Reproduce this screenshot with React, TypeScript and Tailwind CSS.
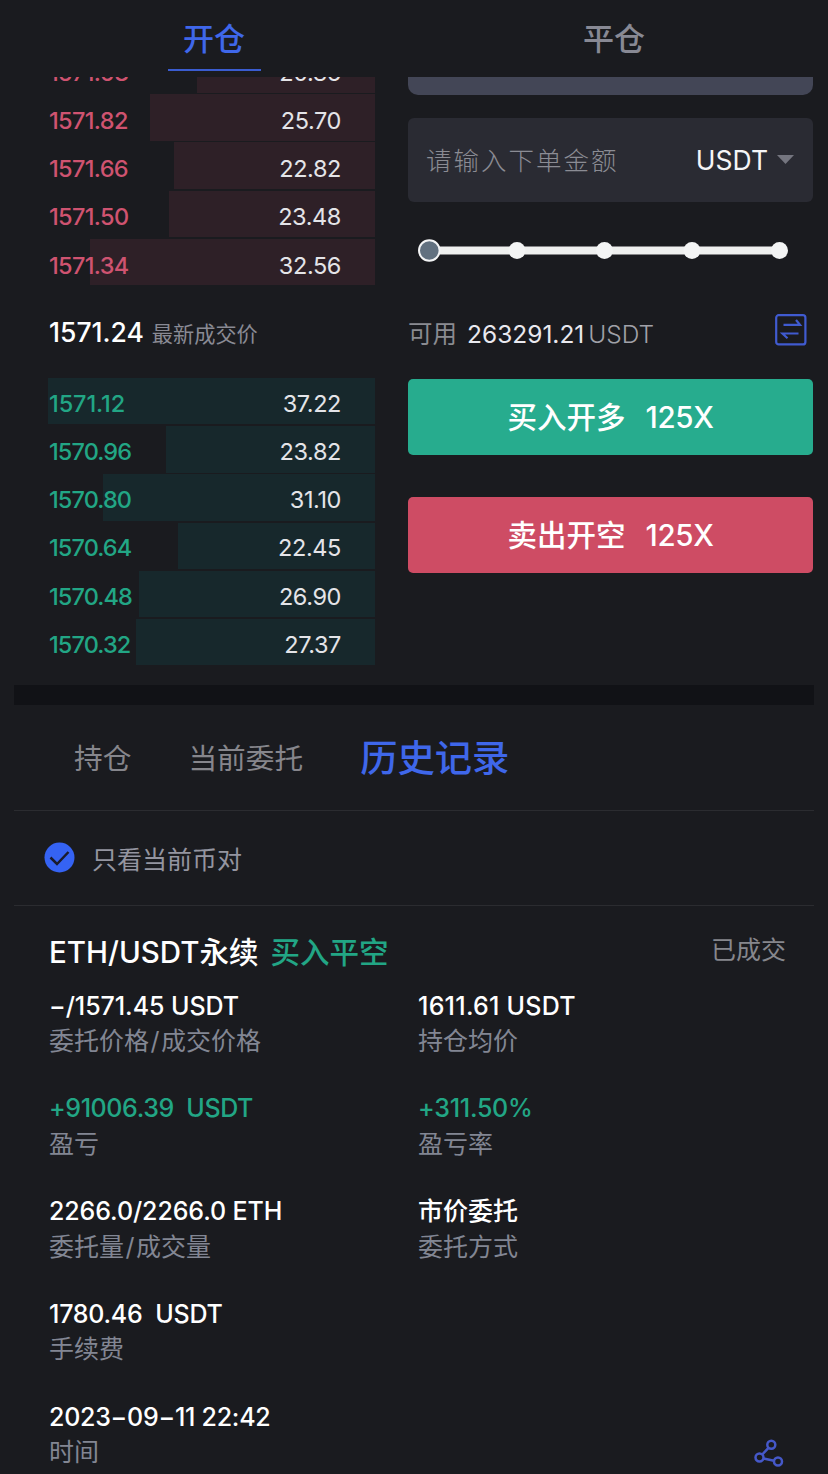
type Order = { price: string; amount: string; depth: number }

const asks: Order[] = [
  { price: '1571.98', amount: '20.36', depth: 178 },
  { price: '1571.82', amount: '25.70', depth: 225 },
  { price: '1571.66', amount: '22.82', depth: 201 },
  { price: '1571.50', amount: '23.48', depth: 206 },
  { price: '1571.34', amount: '32.56', depth: 285 },
]

const bids: Order[] = [
  { price: '1571.12', amount: '37.22', depth: 327 },
  { price: '1570.96', amount: '23.82', depth: 209 },
  { price: '1570.80', amount: '31.10', depth: 272 },
  { price: '1570.64', amount: '22.45', depth: 197 },
  { price: '1570.48', amount: '26.90', depth: 236 },
  { price: '1570.32', amount: '27.37', depth: 239 },
]

const details = [
  { value: '−/1571.45 USDT', label: '委托价格/成交价格', style: 'text-white', tracking: 'tracking-[-0.05px]' },
  { value: '1611.61 USDT', label: '持仓均价', style: 'text-white', tracking: 'tracking-[0.25px]' },
  { value: '+91006.39  USDT', label: '盈亏', style: 'text-[#22a685]', tracking: 'tracking-[-0.4px]' },
  { value: '+311.50%', label: '盈亏率', style: 'text-[#22a685]', tracking: 'tracking-[-0.25px]' },
  { value: '2266.0/2266.0 ETH', label: '委托量/成交量', style: 'text-white', tracking: 'tracking-[-0.1px]' },
  { value: '市价委托', label: '委托方式', style: 'text-white', tracking: 'tracking-normal' },
  { value: '1780.46  USDT', label: '手续费', style: 'text-white col-span-2', tracking: 'tracking-[-0.25px]' },
  { value: '2023−09−11 22:42', label: '时间', style: 'text-white col-span-2', tracking: 'tracking-[-0.25px]' },
]

function OrderRow({ order, side }: { order: Order; side: 'ask' | 'bid' }) {
  return (
    <div className="group grid h-[48.2px] grid-cols-1 grid-rows-1">
      <div
        className={`col-start-1 row-start-1 h-[46.5px] justify-self-end ${side === 'ask' ? 'bg-[#2e2027]' : 'bg-[#17282c]'}`}
        style={{ width: order.depth }}
      />
      <div
        className={`col-start-1 row-start-1 flex items-center justify-between pl-px pr-[34px] text-[23.5px] ${side === 'ask' ? 'pt-[5px]' : 'pt-[3px]'}`}
      >
        <span
          className={`font-medium ${side === 'ask' ? 'tracking-[-0.65px] text-[#cf5370]' : 'tracking-[-0.9px] text-[#22a685] group-first:tracking-[-0.1px]'}`}
        >
          {order.price}
        </span>
        <span className="tracking-[-0.4px] text-[#e4e4e8]">{order.amount}</span>
      </div>
    </div>
  )
}

function Slider() {
  return (
    <svg className="mt-[36.5px] block" width="405" height="26" viewBox="0 0 405 26">
      <path d="M21 12.5H372" stroke="#eff0ef" strokeWidth="8" />
      {[109, 196.5, 284, 371.5].map((x) => (
        <circle key={x} cx={x} cy="12.5" r="8.5" fill="#f3f4f4" />
      ))}
      <circle cx="21.3" cy="12.5" r="10.3" fill="#627180" stroke="#f3f4f5" strokeWidth="2" />
    </svg>
  )
}

function OrderForm() {
  return (
    <div className="w-[405px]">
      <div className="h-[17.5px] rounded-b-[10px] bg-[#434656]" />
      <div className="mt-[23px] flex h-[84px] items-center rounded-md bg-[#2a2b33] pl-[18px] pr-[19px]">
        <span className="flex-1 pt-[3px] text-[25.5px] font-light tracking-[2px] text-[#8b8c94]">请输入下单金额</span>
        <span className="pt-px text-[26.5px] text-[#f5f5f7]">USDT</span>
        <svg className="ml-[9px]" width="17" height="9" viewBox="0 0 17 9">
          <path d="M0 0H17L8.5 9Z" fill="#74757f" />
        </svg>
      </div>
      <Slider />
      <div className="mt-[50px] flex h-8 items-center">
        <span className="pt-[9px] text-[24.5px] text-[#8a8b91]">可用</span>
        <span className="ml-2.5 pt-[9px] text-[24.5px] text-[#e9e9ef]">263291.21</span>
        <span className="ml-1 pt-[9px] text-[24.5px] font-light text-[#a0a1a8]">USDT</span>
        <svg className="ml-auto mr-1.5" width="32" height="32" viewBox="0 0 32 32" fill="none" stroke="#405bd0">
          <rect x="1.2" y="1.2" width="29.2" height="29.2" rx="2.5" strokeWidth="2.2" />
          <path d="M8.5 10.8H25L21 6M23.5 19.5H7.5L12.5 24.2" strokeWidth="2.2" />
        </svg>
      </div>
      <button className="mt-[33px] flex h-[76px] w-full items-center justify-center gap-5 rounded-[5px] bg-[#27ac8e] pt-0.5 text-[29.5px] font-medium text-white">
        <span>买入开多</span>
        <span className="tracking-[-0.3px]">125X</span>
      </button>
      <button className="mt-[42px] flex h-[76px] w-full items-center justify-center gap-5 rounded-[5px] bg-[#ce4c64] pt-0.5 text-[29.5px] font-medium text-white">
        <span>卖出开空</span>
        <span className="tracking-[-0.3px]">125X</span>
      </button>
    </div>
  )
}

export default function App() {
  return (
    <div className="h-[1474px] w-[828px] overflow-hidden bg-[#1a1b1f] px-[14px] font-[Inter,'Noto_Sans_CJK_SC',sans-serif] leading-none whitespace-pre">
      {/* Open / close tabs */}
      <header className="flex h-[77px] text-[31px] font-medium">
        <div className="flex flex-1 flex-col items-center">
          <span className="flex h-[71px] w-[93px] items-center justify-center border-b-2 border-[#3a5cd0] pt-[7px] text-[#3f67ea]">开仓</span>
        </div>
        <div className="flex flex-1 justify-center">
          <span className="flex h-[69px] items-center pt-[7px] text-[#888994]">平仓</span>
        </div>
      </header>

      <section className="flex h-[607.5px] justify-between pl-[34px] pr-px">
        {/* Order book */}
        <div className="w-[327px] overflow-hidden">
          <div className="-mt-[31px]">
            {asks.map((o) => (
              <OrderRow key={o.price} order={o} side="ask" />
            ))}
          </div>
          <div className="flex h-[91px] items-center pl-px">
            <span className="text-[26.5px] font-medium text-white">1571.24</span>
            <span className="ml-2 pt-1 text-[21.2px] text-[#898a94]">最新成交价</span>
          </div>
          <div>
            {bids.map((o) => (
              <OrderRow key={o.price} order={o} side="bid" />
            ))}
          </div>
        </div>
        <OrderForm />
      </section>

      <div className="h-5 bg-[#111216]" />

      {/* Record tabs */}
      <nav className="flex h-[106px] items-center border-b border-[#2b2c30] pl-[60px] pt-1 text-[28.7px] text-[#86868c]">
        <span>持仓</span>
        <span className="ml-[57px]">当前委托</span>
        <span className="ml-[57px] text-[37.3px] font-medium text-[#3f67ea]">历史记录</span>
      </nav>

      <div className="flex h-[95px] items-center border-b border-[#2b2c30] pl-[30px]">
        <svg width="31" height="31" viewBox="0 0 31 31">
          <circle cx="15.5" cy="15.5" r="15" fill="#3563f3" />
          <path d="M6.5 15.5L13 22L24.5 10" fill="none" stroke="#1a1b2b" strokeWidth="2.5" />
        </svg>
        <span className="ml-[17px] pt-[5px] text-[25px] text-[#9495a0]">只看当前币对</span>
      </div>

      {/* Order record */}
      <section className="pl-[35px] pr-7">
        <div className="flex h-[83px] items-center pt-[11px] text-[29.5px] font-medium">
          <span className="text-white">ETH/USDT永续</span>
          <span className="ml-3 text-[#22a685]">买入平空</span>
          <span className="ml-auto pb-1 text-[25px] font-normal text-[#86878d]">已成交</span>
        </div>
        <div className="grid grid-cols-[369px_1fr]">
          {details.map((d) => (
            <div key={d.label} className={`h-[102.8px] ${d.style}`}>
              <div className={`flex h-[35px] items-center text-[25px] font-medium ${d.tracking}`}>{d.value}</div>
              <div className="flex h-[35px] items-center pt-px text-[25px] text-[#828693]">
                {d.label.split('/').map((part, i) => (
                  <span key={part}>
                    {i > 0 && <span className="px-[1.5px]">/</span>}
                    {part}
                  </span>
                ))}
              </div>
            </div>
          ))}
        </div>
      </section>

      {/* Share */}
      <svg className="absolute left-[754px] top-[1439px]" width="30" height="28" viewBox="0 0 30 28" fill="none" stroke="#4558c8" strokeWidth="2.5">
        <circle cx="17.3" cy="5.8" r="4" />
        <circle cx="5.5" cy="18.5" r="4" />
        <circle cx="24" cy="22.5" r="4" />
        <path d="M14.5 8.8L8.3 15.5M9.5 19.5L20 21.8" />
      </svg>
    </div>
  )
}
